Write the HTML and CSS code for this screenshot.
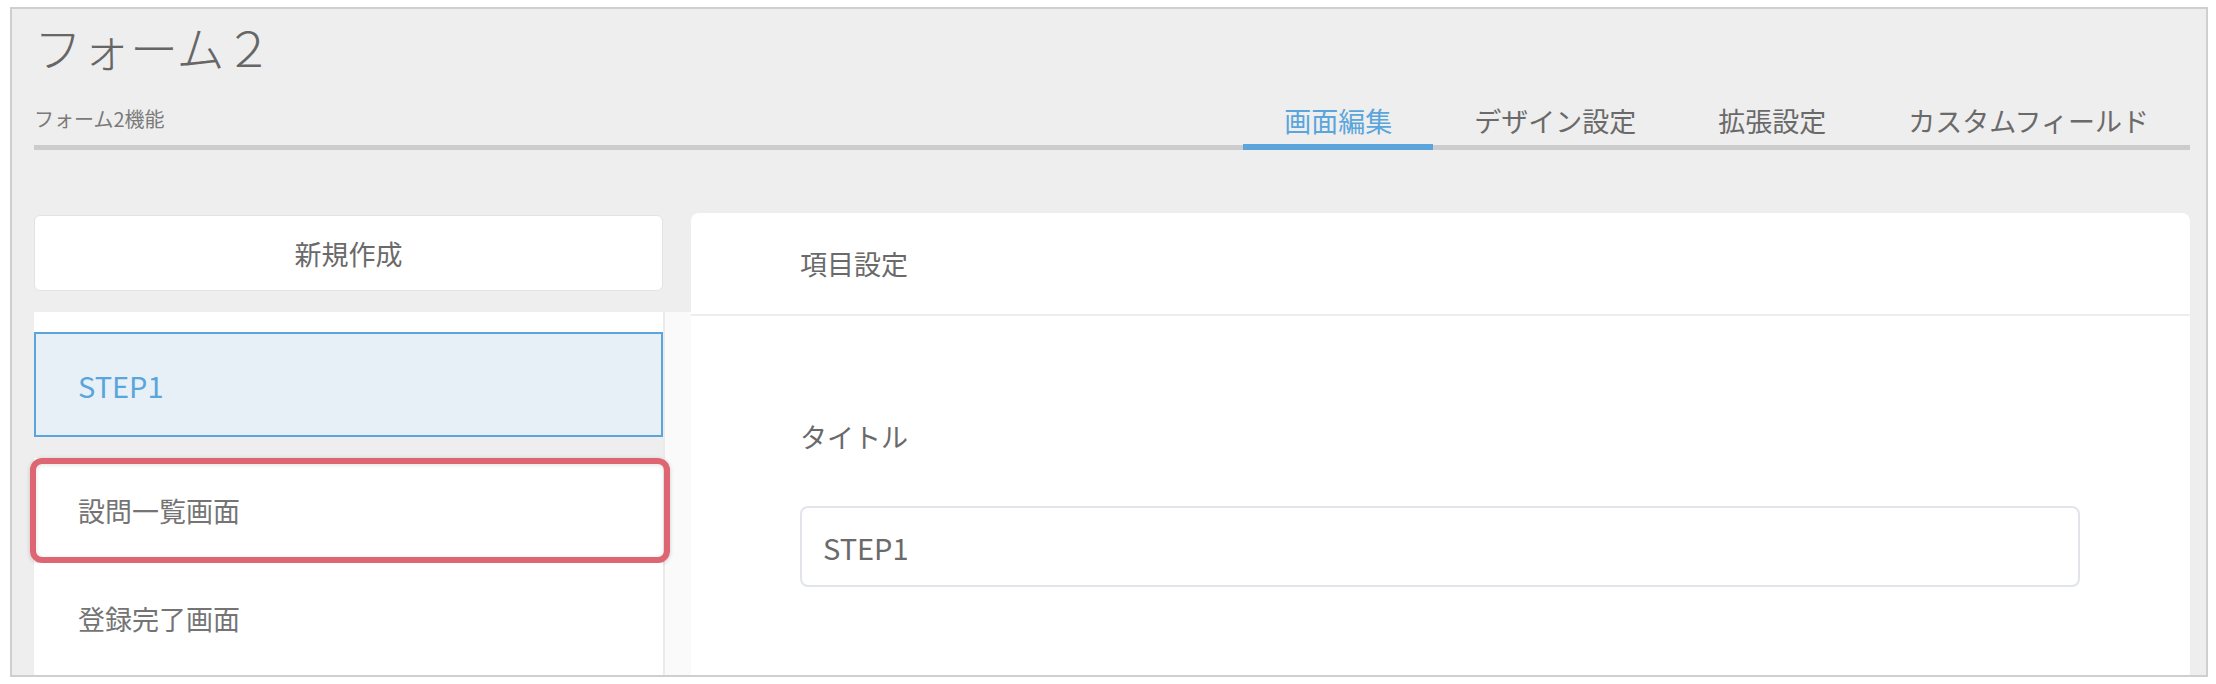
FILE: index.html
```html
<!DOCTYPE html>
<html lang="ja">
<head>
<meta charset="utf-8">
<title>フォーム2</title>
<link rel="stylesheet" href="styles.css">
</head>
<body>
<div class="frame">
  <header class="page-head">
    <h1 class="title">フォーム２</h1>
    <div class="head-row">
      <div class="subtitle">フォーム2機能</div>
      <nav class="tabs">
        <div class="tab active">画面編集</div>
        <div class="tab">デザイン設定</div>
        <div class="tab">拡張設定</div>
        <div class="tab">カスタムフィールド</div>
      </nav>
    </div>
  </header>
  <main class="main">
    <aside class="left-col">
      <div class="new-card">新規作成</div>
      <div class="list-wrap">
        <div class="list">
          <div class="item selected"><span class="en">STEP1</span></div>
          <div class="drop-gap"></div>
          <div class="item highlighted">設問一覧画面<span class="annotation"></span></div>
          <div class="item last">登録完了画面</div>
        </div>
      </div>
    </aside>
    <section class="right-card">
      <div class="card-head">項目設定</div>
      <div class="card-body">
        <div class="field-label">タイトル</div>
        <div class="input"><span class="en">STEP1</span></div>
      </div>
    </section>
  </main>
</div>
</body>
</html>
```
FILE: styles.css
```css
* { box-sizing: border-box; }
html, body { margin: 0; padding: 0; background: #ffffff; }
body {
  font-family: "Noto Sans CJK JP", "Noto Sans", sans-serif;
  color: #6a6a6a;
}
.frame {
  margin: 7px 8px 0 10px;
  height: 670px;
  border: 2px solid #cfcfcf;
  background: #eeeeee;
  padding: 13px 16px 0 22px;
  display: flex;
  flex-direction: column;
  overflow: hidden;
}
.title {
  margin: 0;
  font-size: 48px;
  line-height: 48px;
  font-weight: 300;
  color: #666666;
}
.head-row {
  margin-top: 37px;
  display: flex;
  justify-content: space-between;
  align-items: flex-end;
  border-bottom: 5px solid #cccccc;
}
.subtitle {
  font-size: 20px;
  line-height: 20px;
  color: #7a7a7a;
  padding-bottom: 16px;
}
.tabs { display: flex; }
.tab {
  font-size: 27px;
  line-height: 27px;
  padding: 0 41px 10px;
  border-bottom: 6px solid transparent;
  margin-bottom: -5px;
  color: #6a6a6a;
}
.tab.active {
  color: #5aa5db;
  border-bottom-color: #5aa5db;
}
.main {
  flex: 1;
  display: flex;
  margin-top: 63px;
  min-height: 0;
}
.left-col {
  width: 657px;
  display: flex;
  flex-direction: column;
}
.new-card {
  margin-top: 2px;
  width: 629px;
  height: 76px;
  background: #ffffff;
  border: 1px solid #e3e3e3;
  border-radius: 6px;
  display: flex;
  align-items: center;
  justify-content: center;
  font-size: 27px;
  color: #6a6a6a;
}
.list-wrap {
  margin-top: 21px;
  flex: 1;
  background: #fafafa;
  padding-right: 26px;
}
.list {
  height: 100%;
  background: #ffffff;
  border-right: 2px solid #ebebeb;
  padding-top: 20px;
}
.item {
  position: relative;
  height: 105px;
  border: 2px solid transparent;
  padding-left: 42px;
  display: flex;
  align-items: center;
  font-size: 27px;
  color: #747474;
  background: #ffffff;
}
.item.last { padding-top: 6px; }
.item.selected {
  background: #e8f0f7;
  border-color: #5aa5db;
  color: #5aa5db;
}
.drop-gap {
  height: 21px;
  background: #eeeeee;
}
.annotation {
  position: absolute;
  top: -2px;
  bottom: -2px;
  left: -6px;
  right: -9px;
  border: 6px solid #de6572;
  border-radius: 12px;
  box-shadow: 0 1px 4px rgba(0, 0, 0, 0.18), inset 0 1px 4px rgba(0, 0, 0, 0.12);
}
.en { font-size: 29px; }
.right-card {
  flex: 1;
  background: #ffffff;
  border-radius: 8px 8px 0 0;
  display: flex;
  flex-direction: column;
}
.card-head {
  height: 103px;
  border-bottom: 2px solid #ededed;
  display: flex;
  align-items: center;
  padding-left: 109px;
  font-size: 27px;
  color: #6a6a6a;
}
.card-body {
  flex: 1;
  padding: 107px 110px 0 109px;
}
.field-label {
  font-size: 27px;
  line-height: 27px;
  color: #6a6a6a;
  margin-bottom: 56px;
}
.input {
  height: 81px;
  border: 2px solid #e1e5ea;
  border-radius: 8px;
  padding-left: 21px;
  display: flex;
  align-items: center;
  color: #6a6a6a;
}
```
